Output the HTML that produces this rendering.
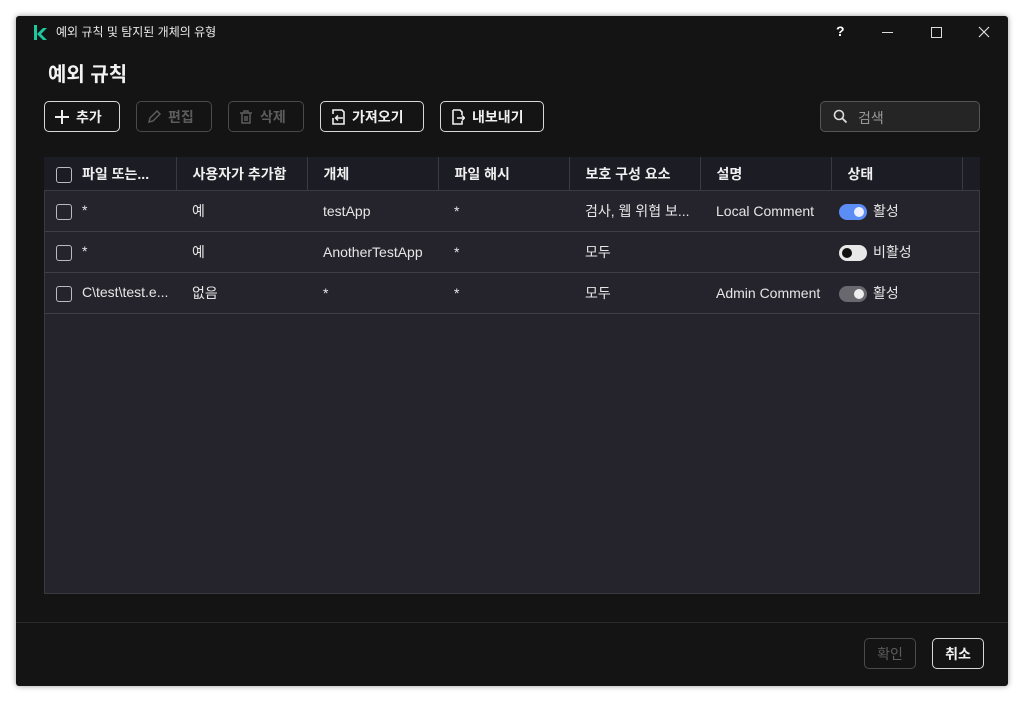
<!DOCTYPE html><html><head><meta charset="utf-8"><style>
body{margin:0;width:1024px;height:702px;background:#fff;font-family:"Liberation Sans","Noto Sans CJK KR",sans-serif;position:relative;overflow:hidden}
.win{position:absolute;left:16px;top:16px;width:992px;height:670px;background:#141414;border-radius:3px;box-shadow:0 0 6px rgba(0,0,0,.4)}
.abs{position:absolute}
.t{color:#e8e8e8;font-size:13px}
.btn{position:absolute;top:85px;height:31px;border:1px solid #d8d8d8;border-radius:5px;box-sizing:border-box;color:#f0f0f0;font-size:14px;font-weight:bold;display:flex;align-items:center;gap:7px;padding:0 10px}
.dis{border-color:#4a4a4a;color:#5c5c5c}
table{position:absolute;left:28px;top:141px;width:936px;border-collapse:collapse;table-layout:fixed}
.tbl{position:absolute;left:28px;top:141px;width:934px;height:435px;background:#25242c;border:1px solid #3a3a40}
th{height:33px;background:#1c1c24;color:#f0f0f0;font-size:14px;font-weight:bold;text-align:left;padding:0 0 0 16px;border-right:1px solid #3a3a42;border-bottom:1px solid #3a3a42;white-space:nowrap}
td{height:40px;color:#e6e6e6;font-size:14px;padding:0 0 0 16px;border-bottom:1px solid #3e3e46;white-space:nowrap;overflow:hidden}
.cb{display:inline-block;width:14px;height:14px;border:1.5px solid #bbb;border-radius:3px;vertical-align:middle;margin:0 10px 0 -4px}
.tg{display:inline-block;width:28px;height:16px;border-radius:8px;vertical-align:middle;position:relative;margin:0 6px 0 -8px}
.tg i{position:absolute;top:3px;width:10px;height:10px;border-radius:50%}
</style></head><body><div class="win">
<svg class="abs" style="left:17px;top:9px" width="14" height="15"><path d="M1 0h3v15H1zM4 9l6-6h4l-6 6 6 6h-4z" fill="#1dc8a0"/></svg>
<div class="abs t" style="left:40px;top:7px;font-size:12px">예외 규칙 및 탐지된 개체의 유형</div>
<div class="abs" style="left:820px;top:7px;color:#fff;font-weight:bold;font-size:14px">?</div>
<div class="abs" style="left:866px;top:16px;width:11px;height:1px;background:#ddd"></div>
<div class="abs" style="left:915px;top:11px;width:9px;height:9px;border:1px solid #ddd"></div>
<svg class="abs" style="left:962px;top:10px" width="12" height="12"><path d="M1 1l10 10M11 1L1 11" stroke="#ddd" stroke-width="1.2"/></svg>
<div class="abs" style="left:32px;top:42px;color:#f2f2f2;font-size:20px;font-weight:bold">예외 규칙</div>
<div class="btn" style="left:28px;width:76px"><svg width="14" height="14"><path d="M7 0v14M0 7h14" stroke="#eee" stroke-width="2"/></svg>추가</div>
<div class="btn dis" style="left:120px;width:76px"><svg width="14" height="14"><path d="M2 12l1-4 7-7 3 3-7 7z" stroke="#5c5c5c" fill="none" stroke-width="1.5"/></svg>편집</div>
<div class="btn dis" style="left:212px;width:76px"><svg width="14" height="14"><path d="M1 3h12M5 3V1h4v2M3 3v10h8V3M6 6v5M8 6v5" stroke="#5c5c5c" fill="none" stroke-width="1.5"/></svg>삭제</div>
<div class="btn" style="left:304px;width:104px"><svg width="14" height="16"><path d="M4 1h7l2 2v12H2V9M2 5V1h2" stroke="#eee" fill="none" stroke-width="1.6"/><path d="M12 9H5M7 6.5L4.5 9 7 11.5" stroke="#eee" fill="none" stroke-width="1.5"/></svg>가져오기</div>
<div class="btn" style="left:424px;width:104px"><svg width="14" height="16"><path d="M2 1h7l2 2v3M11 12v3H2V1" stroke="#eee" fill="none" stroke-width="1.6"/><path d="M6 9h7M11 6.5L13.5 9 11 11.5" stroke="#eee" fill="none" stroke-width="1.5"/></svg>내보내기</div>
<div class="abs" style="left:804px;top:85px;width:160px;height:31px;border:1px solid #555;border-radius:5px;background:#252525;box-sizing:border-box"><svg class="abs" style="left:12px;top:7px" width="15" height="15"><circle cx="6" cy="6" r="4.5" stroke="#ddd" fill="none" stroke-width="1.6"/><path d="M9.5 9.5l4 4" stroke="#ddd" stroke-width="1.8"/></svg><span class="abs" style="left:37px;top:6px;color:#999;font-size:14px">검색</span></div>
<div class="tbl"></div>
<table><colgroup><col style="width:132px"><col style="width:131px"><col style="width:131px"><col style="width:131px"><col style="width:131px"><col style="width:131px"><col style="width:131px"><col style="width:18px"></colgroup>
<tr><th><span class="cb"></span>파일 또는...</th><th>사용자가 추가함</th><th>개체</th><th>파일 해시</th><th>보호 구성 요소</th><th>설명</th><th>상태</th><th style="border-right:none"></th></tr>
<tr><td><span class="cb"></span>*</td><td>예</td><td>testApp</td><td>*</td><td>검사, 웹 위협 보...</td><td>Local Comment</td><td><span class="tg" style="background:#5b8ef5"><i style="right:3px;background:#eef"></i></span>활성</td><td></td></tr>
<tr><td><span class="cb"></span>*</td><td>예</td><td>AnotherTestApp</td><td>*</td><td>모두</td><td></td><td><span class="tg" style="background:#e8e8e8"><i style="left:3px;background:#111"></i></span>비활성</td><td></td></tr>
<tr><td><span class="cb"></span>C\test\test.e...</td><td>없음</td><td>*</td><td>*</td><td>모두</td><td>Admin Comment</td><td><span class="tg" style="background:#68686e"><i style="right:3px;background:#eee"></i></span>활성</td><td></td></tr>
</table>
<div class="abs" style="left:0;top:606px;width:992px;height:1px;background:#2a2a2a"></div>
<div class="btn dis" style="left:848px;top:622px;width:52px;height:31px;font-weight:normal;justify-content:center;padding:0">확인</div>
<div class="btn" style="left:916px;top:622px;width:52px;height:31px;justify-content:center;padding:0">취소</div>
</div></body></html>
